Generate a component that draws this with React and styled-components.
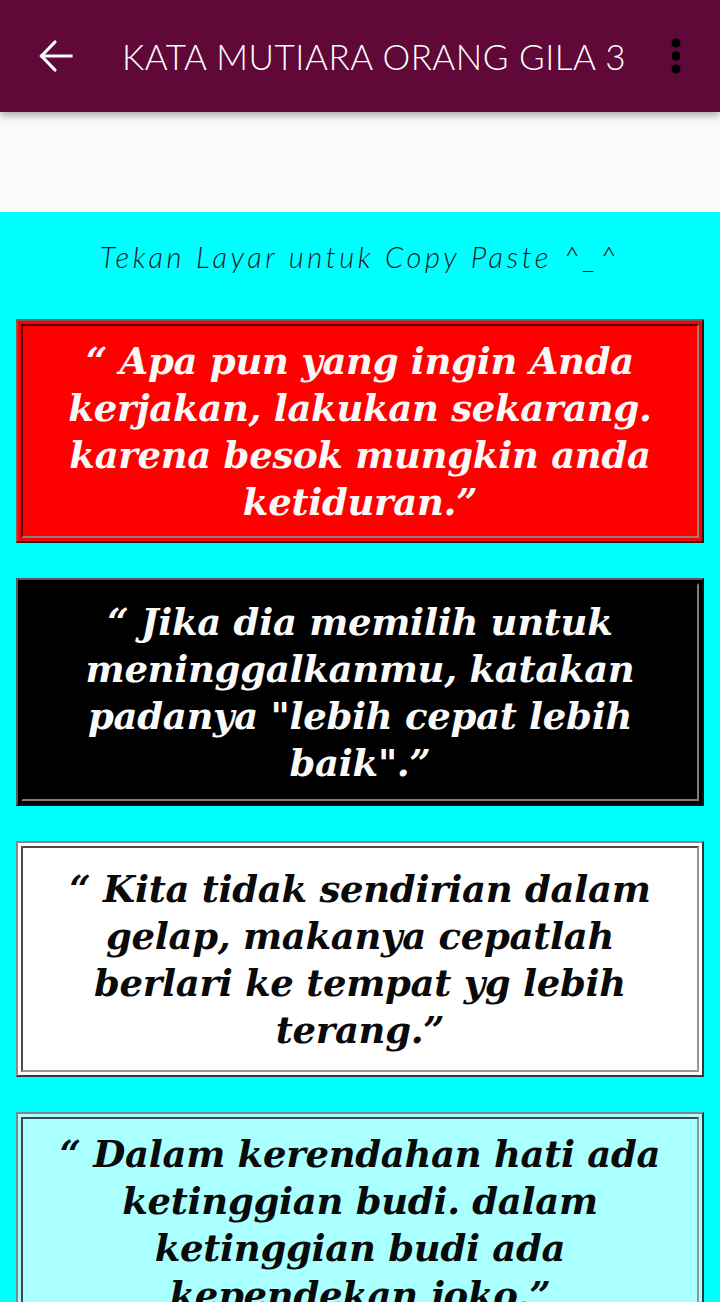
import React from 'react';
import styled, { createGlobalStyle } from 'styled-components';

const GlobalStyle = createGlobalStyle`
  html, body {
    margin: 0;
    padding: 0;
    background: #00ffff;
  }
  body {
    font-family: "DejaVu Serif", serif;
  }
`;

const Page = styled.div`
  width: 720px;
  min-height: 1302px;
  background: #00ffff;
  overflow: hidden;
`;

const Toolbar = styled.header`
  position: relative;
  z-index: 2;
  height: 112px;
  background: #600838;
  display: flex;
  align-items: center;
  padding: 0 0 0 38px;
  box-shadow: 0 3px 8px rgba(0, 0, 0, 0.35);
`;

const Title = styled.h1`
  flex: 1;
  margin: 0 0 0 48px;
  color: #ffffff;
  font-family: Lato, "Open Sans", sans-serif;
  font-weight: 300;
  font-size: 35px;
  letter-spacing: 0.5px;
  white-space: nowrap;
`;

const MenuButton = styled.div`
  width: 88px;
  display: flex;
  justify-content: center;
`;

const AdSlot = styled.div`
  height: 100px;
  background: #fafafa;
`;

const Hint = styled.p`
  margin: 0;
  padding: 27px 0 45px;
  text-align: center;
  color: #1a1a1a;
  font-family: Lato, "Open Sans", sans-serif;
  font-weight: 300;
  font-style: italic;
  font-size: 29px;
  letter-spacing: 3.6px;
`;

const List = styled.div`
  display: flex;
  flex-direction: column;
  gap: 35px;
  padding: 0 16px 40px;
`;

const Card = styled.div`
  background: ${p => p.$bg};
  border: 2px solid;
  border-color: rgba(110, 110, 110, 0.8) rgba(20, 20, 20, 0.85) rgba(20, 20, 20, 0.85) rgba(110, 110, 110, 0.8);
  padding: 3px;
`;

const Frame = styled.div`
  border: 2px solid;
  border-color: rgba(0, 0, 0, 0.7) rgba(140, 140, 140, 0.9) rgba(140, 140, 140, 0.9) rgba(0, 0, 0, 0.7);
  padding: ${p => 12 + p.$extra}px 8px ${p => 10 + p.$extra}px;
`;

const Quote = styled.p`
  margin: 0;
  text-align: center;
  color: ${p => p.$color};
  font-family: "DejaVu Serif", serif;
  font-weight: bold;
  font-style: italic;
  font-size: 37px;
  line-height: 47px;
  letter-spacing: -0.3px;
`;

const quotes = [
  { bg: '#ff0000', color: '#fafafa', extra: 0, text: '“ Apa pun yang ingin Anda kerjakan, lakukan sekarang. karena besok mungkin anda ketiduran.”' },
  { bg: '#000000', color: '#fafafa', extra: 2, text: '“ Jika dia memilih untuk meninggalkanmu, katakan padanya "lebih cepat lebih baik".”' },
  { bg: '#ffffff', color: '#0a0a0a', extra: 6, text: '“ Kita tidak sendirian dalam gelap, makanya cepatlah berlari ke tempat yg lebih terang.”' },
  { bg: '#aaffff', color: '#0a0a0a', extra: 0, text: '“ Dalam kerendahan hati ada ketinggian budi. dalam ketinggian budi ada kependekan joko.”' },
];

const BackIcon = () => (
  <svg width="36" height="36" viewBox="0 0 36 36" fill="none" stroke="#ffffff" strokeWidth="3.2" strokeLinecap="square">
    <path d="M4 18H33" />
    <path d="M17 4L3.5 18L17 32" strokeLinecap="round" strokeLinejoin="miter" />
  </svg>
);

const MoreIcon = () => (
  <svg width="12" height="36" viewBox="0 0 12 36" fill="#000000">
    <circle cx="6" cy="5" r="4.5" />
    <circle cx="6" cy="18" r="4.5" />
    <circle cx="6" cy="31" r="4.5" />
  </svg>
);

export default function App() {
  return (
    <Page>
      <GlobalStyle />
      <Toolbar>
        <BackIcon />
        <Title>KATA MUTIARA ORANG GILA 3</Title>
        <MenuButton>
          <MoreIcon />
        </MenuButton>
      </Toolbar>
      <AdSlot />
      <Hint>Tekan Layar untuk Copy Paste ^_^</Hint>
      <List>
        {quotes.map((q, i) => (
          <Card key={i} $bg={q.bg}>
            <Frame $extra={q.extra}>
              <Quote $color={q.color}>{q.text}</Quote>
            </Frame>
          </Card>
        ))}
      </List>
    </Page>
  );
}
